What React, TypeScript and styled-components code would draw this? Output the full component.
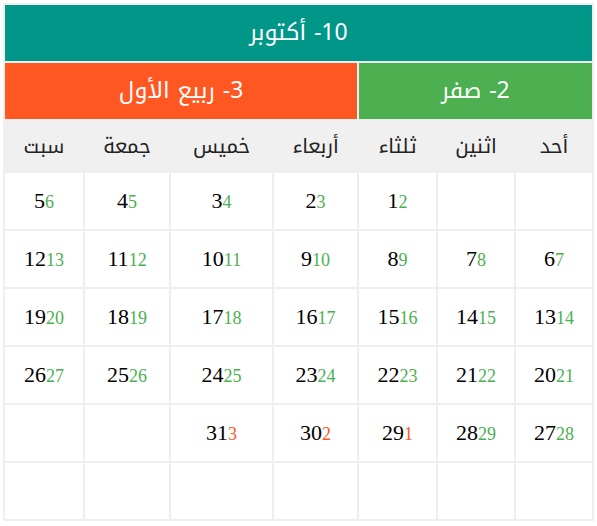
import React from "react";
import styled, { createGlobalStyle } from "styled-components";

const GlobalStyle = createGlobalStyle`
  body {
    margin: 0;
    background: #ffffff;
    font-family: "Liberation Serif", serif;
  }
`;

const Page = styled.div`
  padding: 3px;
`;

const Table = styled.table`
  direction: rtl;
  width: 591px;
  table-layout: fixed;
  border-collapse: separate;
  border-spacing: 2px;
  background-color: #efefef;
`;

const Col = styled.col<{ $w: number }>`
  width: ${(p) => p.$w}px;
`;

const HeadCell = styled.th<{ $bg: string }>`
  height: 56px;
  padding: 0;
  background-color: ${(p) => p.$bg};
  color: #ffffff;
  font-family: "Noto Kufi Arabic", "Noto Sans", sans-serif;
  font-size: 23px;
  font-weight: normal;
  line-height: 1.2;
  text-align: center;
  vertical-align: middle;
`;

const DayName = styled.th`
  height: 50px;
  padding: 0;
  background-color: #f0f0f0;
  color: #222222;
  font-family: "Noto Kufi Arabic", "Noto Sans", sans-serif;
  font-size: 20px;
  font-weight: normal;
  line-height: 1.2;
  text-align: center;
`;

const DateCell = styled.td`
  height: 56px;
  padding: 0;
  background-color: #ffffff;
  text-align: center;
  vertical-align: middle;
`;

const Greg = styled.span`
  color: #000000;
  font-size: 22px;
`;

const Hijri = styled.span<{ $next?: boolean }>`
  color: ${(p) => (p.$next ? "#ff5722" : "#4caf50")};
  font-size: 18px;
`;

// widths from right (أحد) to left (سبت)
const colWidths = [76, 76, 77, 83, 101, 84, 78];
const dayNames = ["أحد", "اثنين", "ثلثاء", "أربعاء", "خميس", "جمعة", "سبت"];

type Day = { g: number; h: number; next?: boolean } | null;

const buildWeeks = (): Day[][] => {
  const days: Day[] = [null, null];
  for (let g = 1; g <= 31; g++) {
    if (g <= 28) days.push({ g, h: g + 1 });
    else days.push({ g, h: g - 28, next: true });
  }
  while (days.length < 42) days.push(null);
  const weeks: Day[][] = [];
  for (let i = 0; i < 42; i += 7) weeks.push(days.slice(i, i + 7));
  return weeks;
};

const App: React.FC = () => {
  const weeks = buildWeeks();

  return (
    <Page>
      <GlobalStyle />
      <Table>
        <colgroup>
          {colWidths.map((w, i) => (
            <Col key={i} $w={w} />
          ))}
        </colgroup>
        <thead>
          <tr>
            <HeadCell colSpan={7} $bg="#009688">
              10- أكتوبر
            </HeadCell>
          </tr>
          <tr>
            <HeadCell colSpan={3} $bg="#4caf50">
              2- صفر
            </HeadCell>
            <HeadCell colSpan={4} $bg="#ff5722">
              3- ربيع الأول
            </HeadCell>
          </tr>
          <tr>
            {dayNames.map((d) => (
              <DayName key={d}>{d}</DayName>
            ))}
          </tr>
        </thead>
        <tbody>
          {weeks.map((week, wi) => (
            <tr key={wi}>
              {week.map((day, di) => (
                <DateCell key={di}>
                  {day && (
                    <>
                      <Greg>{day.g}</Greg>
                      <Hijri $next={day.next}>{day.h}</Hijri>
                    </>
                  )}
                </DateCell>
              ))}
            </tr>
          ))}
        </tbody>
      </Table>
    </Page>
  );
};

export default App;
